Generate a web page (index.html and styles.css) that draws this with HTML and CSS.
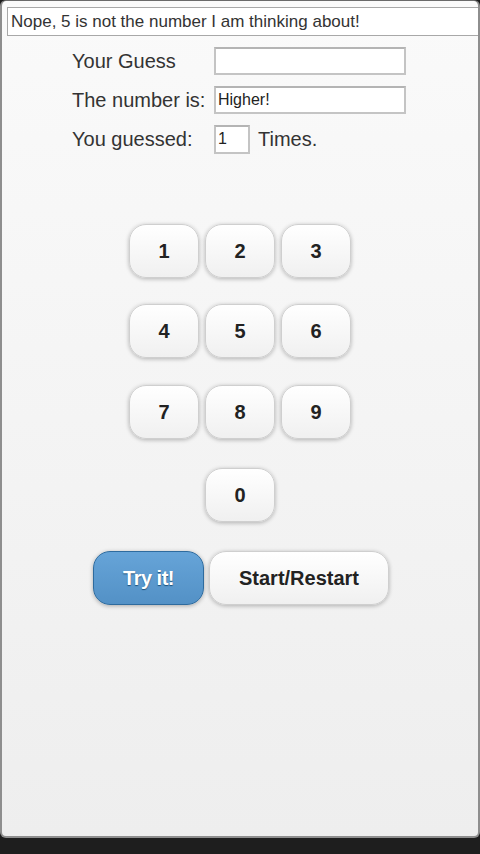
FILE: index.html
```html
<!DOCTYPE html>
<html>
<head>
<meta charset="utf-8">
<link rel="stylesheet" href="styles.css">
</head>
<body>
<div class="frame">
  <div class="message">Nope, 5 is not the number I am thinking about!</div>
  <div class="form">
    <div class="label">Your Guess</div>
    <div class="field"><div class="input wide"></div></div>
    <div class="label">The number is:</div>
    <div class="field"><div class="input wide">Higher!</div></div>
    <div class="label">You guessed:</div>
    <div class="field"><div class="input small">1</div><span class="times">Times.</span></div>
  </div>
  <div class="keypad">
    <div class="keyrow"><button class="key">1</button><button class="key">2</button><button class="key">3</button></div>
    <div class="keyrow"><button class="key">4</button><button class="key">5</button><button class="key">6</button></div>
    <div class="keyrow"><button class="key">7</button><button class="key">8</button><button class="key">9</button></div>
    <div class="keyrow"><button class="key">0</button></div>
  </div>
  <div class="actions">
    <button class="btn primary">Try it!</button>
    <button class="btn secondary">Start/Restart</button>
  </div>
</div>
</body>
</html>
```

FILE: styles.css
```css
html, body {
  margin: 0;
  padding: 0;
  background: #1e1e1e;
  width: 480px;
  height: 854px;
  overflow: hidden;
}
.frame {
  box-sizing: border-box;
  width: 480px;
  height: 838px;
  border: 2px solid #8e8e8e;
  border-top: 1px solid #6a6a6a;
  border-radius: 6px;
  background: linear-gradient(#fafafa, #eeeeee);
  padding: 6px 0 0 5px;
  font-family: "Liberation Sans", Arial, sans-serif;
  color: #2a2a2a;
}
.message {
  box-sizing: border-box;
  height: 29px;
  background: #fff;
  border: 1px solid #a8a8a8;
  border-right: none;
  font-size: 17px;
  line-height: 27px;
  padding-left: 3px;
  color: #333;
  white-space: nowrap;
}
.form {
  display: grid;
  grid-template-columns: 142px 192px;
  row-gap: 11px;
  margin: 11px 0 0 65px;
}
.label {
  font-size: 20px;
  line-height: 28px;
  color: #333;
  white-space: nowrap;
}
.field {
  display: flex;
  align-items: center;
  height: 28px;
}
.input {
  box-sizing: border-box;
  height: 28px;
  background: #fff;
  border: 2px solid #c4c4c4;
  border-top-color: #b4b4b4;
  font-size: 16px;
  line-height: 24px;
  padding-left: 2px;
  color: #222;
}
.input.wide { width: 192px; }
.input.small { width: 36px; height: 29px; }
.times {
  font-size: 20px;
  margin-left: 8px;
  color: #333;
}
.keypad {
  display: flex;
  flex-direction: column;
  align-items: center;
  gap: 26px;
  margin-top: 71px;
  margin-right: 5px;
}
.keyrow {
  display: flex;
  gap: 6px;
}
.keyrow:nth-child(3) { margin-top: 1px; }
.keyrow:nth-child(4) { margin-top: 3px; }
.key {
  box-sizing: border-box;
  width: 70px;
  height: 54px;
  border: 1px solid #cfcfcf;
  border-radius: 17px;
  background: linear-gradient(#ffffff, #f0f0f0);
  box-shadow: 0 1px 4px rgba(0,0,0,0.28);
  font-family: "Liberation Sans", Arial, sans-serif;
  font-weight: bold;
  font-size: 20px;
  color: #222;
  padding: 0;
}
.actions {
  display: flex;
  justify-content: center;
  gap: 5px;
  margin-top: 29px;
  margin-left: 2px;
  margin-right: 5px;
}
.btn {
  box-sizing: border-box;
  height: 54px;
  border-radius: 17px;
  font-family: "Liberation Sans", Arial, sans-serif;
  font-weight: bold;
  font-size: 20px;
  padding: 0;
}
.primary {
  width: 111px;
  background: linear-gradient(#66a4d8, #5391c6);
  border: 1px solid #2e6b9e;
  color: #fff;
  text-shadow: 0 1px 1px #1c4f78;
  box-shadow: 0 1px 4px rgba(0,0,0,0.3);
  letter-spacing: -0.5px;
}
.secondary {
  width: 180px;
  background: linear-gradient(#ffffff, #f0f0f0);
  border: 1px solid #cfcfcf;
  color: #222;
  box-shadow: 0 1px 4px rgba(0,0,0,0.28);
}
```
